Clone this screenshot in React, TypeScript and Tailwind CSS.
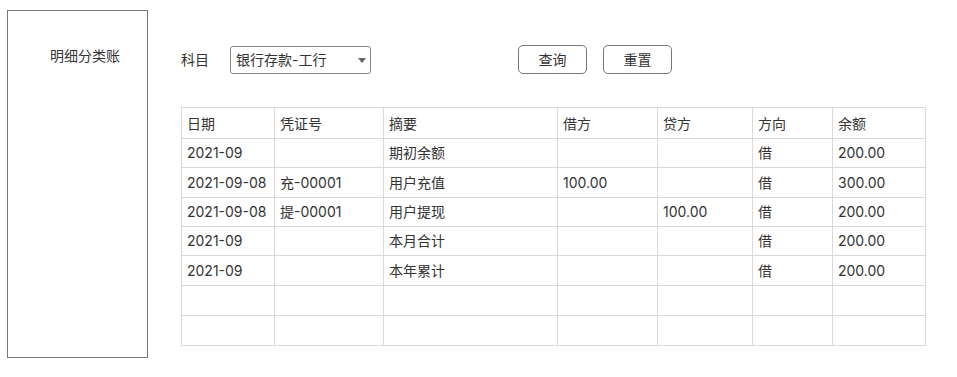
import React from "react";

const cols = [93, 109, 174, 100, 95, 80, 93];
const headers = ["日期", "凭证号", "摘要", "借方", "贷方", "方向", "余额"];
const rows: string[][] = [
  ["2021-09", "", "期初余额", "", "", "借", "200.00"],
  ["2021-09-08", "充-00001", "用户充值", "100.00", "", "借", "300.00"],
  ["2021-09-08", "提-00001", "用户提现", "", "100.00", "借", "200.00"],
  ["2021-09", "", "本月合计", "", "", "借", "200.00"],
  ["2021-09", "", "本年累计", "", "", "借", "200.00"],
  ["", "", "", "", "", "", ""],
  ["", "", "", "", "", "", ""],
];
const rowHeights = [29, 30, 29, 29, 30, 30, 30];

export default function App() {
  return (
    <div className="flex w-[957px] h-[377px] bg-white text-[14px] text-[#333] font-['Inter','Noto_Sans_CJK_SC',sans-serif]">
      <aside className="ml-[7px] mt-[10px] w-[141px] h-[348px] border border-[#777] pl-[42px] pt-[35px] leading-[20px]">
        明细分类账
      </aside>
      <main className="ml-[33px] pt-[45px]">
        <div className="flex items-center h-[29px]">
          <span className="w-[49px] leading-[20px]">科目</span>
          <div className="relative flex items-center w-[141px] h-[28px] border border-[#888] rounded-[3px] pl-[5px]">
            <span className="leading-[20px]">银行存款-工行</span>
            <svg className="absolute left-[127px] top-[11px]" width="8" height="5" viewBox="0 0 8 5">
              <polygon points="0,0 8,0 4,5" fill="#666" />
            </svg>
          </div>
          <button className="ml-[147px] w-[69px] h-[29px] border border-[#777] rounded-[5px] bg-white leading-[20px]">
            查询
          </button>
          <button className="ml-[16px] w-[69px] h-[29px] border border-[#777] rounded-[5px] bg-white leading-[20px]">
            重置
          </button>
        </div>
        <table className="mt-[33px] table-fixed border-collapse w-[744px]">
          <colgroup>
            {cols.map((w, i) => (
              <col key={i} style={{ width: w }} />
            ))}
          </colgroup>
          <thead>
            <tr className="h-[31px]">
              {headers.map((h) => (
                <th key={h} className="border border-[#d9d9d9] px-[5px] pt-[2px] text-left font-normal leading-[20px]">
                  {h}
                </th>
              ))}
            </tr>
          </thead>
          <tbody>
            {rows.map((r, i) => (
              <tr key={i} style={{ height: rowHeights[i] }}>
                {r.map((c, j) => (
                  <td key={j} className="border border-[#d9d9d9] px-[5px] leading-[20px] whitespace-nowrap">
                    {c}
                  </td>
                ))}
              </tr>
            ))}
          </tbody>
        </table>
      </main>
    </div>
  );
}
